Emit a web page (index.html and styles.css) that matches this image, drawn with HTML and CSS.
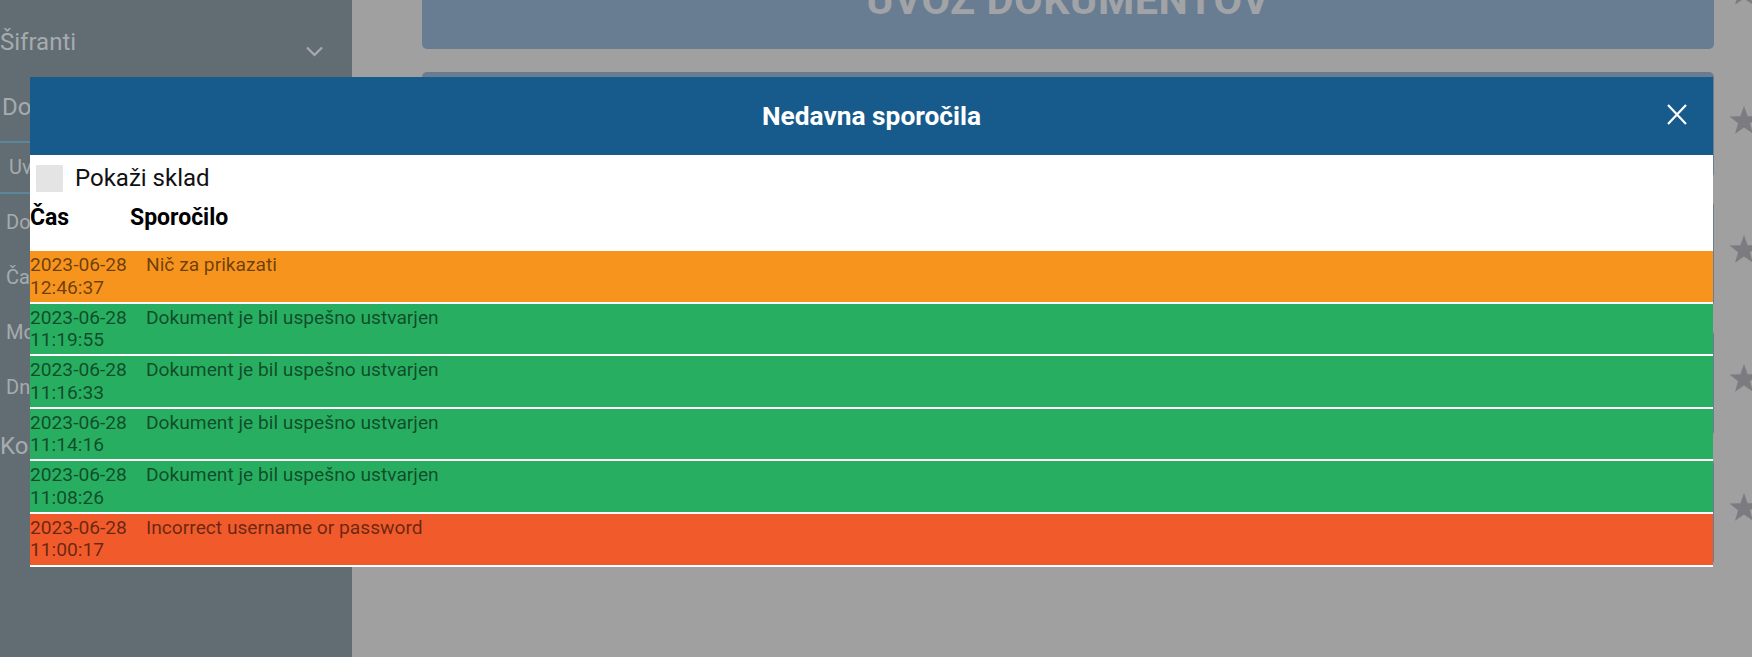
FILE: index.html
```html
<!DOCTYPE html>
<html lang="sl">
<head>
<meta charset="utf-8">
<title>Nedavna sporočila</title>
<link rel="stylesheet" href="styles.css">
</head>
<body>
<div class="app">
  <aside class="sidebar">
    <div class="nav-head first">
      <span>Šifranti</span>
      <svg class="chev" width="17" height="11" viewBox="0 0 17 11"><path d="M1 1.5 L8.5 9 L16 1.5" fill="none" stroke="#a6abae" stroke-width="2.2"/></svg>
    </div>
    <div class="nav-head open">Dokumenti</div>
    <div class="sub-item current">Uvoz dokumentov</div>
    <div class="sub-item">Dokumenti</div>
    <div class="sub-item">Čakalna vrsta</div>
    <div class="sub-item">Moji dokumenti</div>
    <div class="sub-item">Dnevnik</div>
    <div class="nav-head last">Kontakti</div>
  </aside>
  <main class="content">
    <div class="crow">
      <div class="card"><span class="card-title">UVOZ DOKUMENTOV</span></div>
      <svg class="star" width="30" height="28" viewBox="0 0 30 28"><polygon points="15,0 18.6,10.2 29.5,10.6 20.9,17.3 24,27.8 15,21.6 6,27.8 9.1,17.3 0.5,10.6 11.4,10.2" fill="#7c7b82"/></svg>
    </div>
    <div class="crow">
      <div class="card"></div>
      <svg class="star" width="30" height="28" viewBox="0 0 30 28"><polygon points="15,0 18.6,10.2 29.5,10.6 20.9,17.3 24,27.8 15,21.6 6,27.8 9.1,17.3 0.5,10.6 11.4,10.2" fill="#7c7b82"/></svg>
    </div>
    <div class="crow">
      <div class="card"></div>
      <svg class="star" width="30" height="28" viewBox="0 0 30 28"><polygon points="15,0 18.6,10.2 29.5,10.6 20.9,17.3 24,27.8 15,21.6 6,27.8 9.1,17.3 0.5,10.6 11.4,10.2" fill="#7c7b82"/></svg>
    </div>
    <div class="crow">
      <div class="card"></div>
      <svg class="star" width="30" height="28" viewBox="0 0 30 28"><polygon points="15,0 18.6,10.2 29.5,10.6 20.9,17.3 24,27.8 15,21.6 6,27.8 9.1,17.3 0.5,10.6 11.4,10.2" fill="#7c7b82"/></svg>
    </div>
    <div class="crow">
      <div class="card"></div>
      <svg class="star" width="30" height="28" viewBox="0 0 30 28"><polygon points="15,0 18.6,10.2 29.5,10.6 20.9,17.3 24,27.8 15,21.6 6,27.8 9.1,17.3 0.5,10.6 11.4,10.2" fill="#7c7b82"/></svg>
    </div>
  </main>
</div>

<div class="modal">
  <div class="modal-header">
    <h2 class="modal-title">Nedavna sporočila</h2>
    <svg class="close" width="20" height="21" viewBox="0 0 20 21"><path d="M1 1 L19 20 M19 1 L1 20" stroke="#fff" stroke-width="2.2" fill="none"/></svg>
  </div>
  <div class="modal-body">
    <label class="opt">
      <span class="checkbox"></span>
      <span class="opt-label">Pokaži sklad</span>
    </label>
    <div class="thead">
      <span class="th th-time">Čas</span>
      <span class="th">Sporočilo</span>
    </div>
    <div class="msg warn">
      <div class="time">2023-06-28<br>12:46:37</div>
      <div class="text">Nič za prikazati</div>
    </div>
    <div class="msg ok">
      <div class="time">2023-06-28<br>11:19:55</div>
      <div class="text">Dokument je bil uspešno ustvarjen</div>
    </div>
    <div class="msg ok">
      <div class="time">2023-06-28<br>11:16:33</div>
      <div class="text">Dokument je bil uspešno ustvarjen</div>
    </div>
    <div class="msg ok">
      <div class="time">2023-06-28<br>11:14:16</div>
      <div class="text">Dokument je bil uspešno ustvarjen</div>
    </div>
    <div class="msg ok">
      <div class="time">2023-06-28<br>11:08:26</div>
      <div class="text">Dokument je bil uspešno ustvarjen</div>
    </div>
    <div class="msg err">
      <div class="time">2023-06-28<br>11:00:17</div>
      <div class="text">Incorrect username or password</div>
    </div>
  </div>
</div>
</body>
</html>
```

FILE: styles.css
```css
* { box-sizing: border-box; }

html, body {
  margin: 0;
  padding: 0;
  width: 1752px;
  height: 657px;
  overflow: hidden;
  background: #a0a0a0;
  font-family: Roboto, "Noto Sans", sans-serif;
}

.app {
  display: flex;
  height: 657px;
}

/* ---------- sidebar ---------- */
.sidebar {
  width: 352px;
  flex: 0 0 352px;
  height: 657px;
  background: #626d73;
  color: #a6abae;
  overflow: hidden;
  white-space: nowrap;
}

.nav-head {
  font-size: 24px;
  line-height: 28px;
  padding-left: 0;
}

.nav-head.first {
  display: flex;
  justify-content: space-between;
  align-items: flex-start;
  padding: 28px 29px 36px 0;
}

.chev { margin-top: 18px; }

.nav-head.open {
  padding: 0 0 20px 2px;
  border-bottom: 2px solid #5a8799;
}

.nav-head.last {
  padding-top: 18px;
}

.sub-item {
  font-size: 20px;
  line-height: 24px;
  padding: 16px 0 15px 6px;
}

.sub-item.current {
  padding: 12px 0 13px 9px;
  border-bottom: 2px solid #5a8799;
}

/* ---------- main content (behind overlay) ---------- */
.content {
  display: flex;
  flex-direction: column;
  gap: 23px;
  margin-top: -57px;
  padding-left: 70px;
}

.crow {
  display: flex;
  align-items: flex-start;
  gap: 15px;
}

.card {
  width: 1292px;
  height: 106px;
  flex: 0 0 1292px;
  border-radius: 5px;
  background: #687d92;
  text-align: center;
  padding-top: 33px;
}

.card-title {
  font-size: 41.5px;
  line-height: 48px;
  font-weight: 700;
  color: #a1a3a6;
  letter-spacing: 0.5px;
}

.star {
  flex: 0 0 30px;
  margin-top: 34px;
}

/* ---------- modal ---------- */
.modal {
  position: absolute;
  left: 30px;
  top: 77px;
  width: 1683px;
  background: #fff;
}

.modal-header {
  position: relative;
  height: 78px;
  background: #175a8c;
  display: flex;
  align-items: center;
  justify-content: center;
}

.modal-title {
  margin: 0;
  color: #fff;
  font-size: 26.3px;
  font-weight: 700;
  line-height: 30px;
}

.close {
  position: absolute;
  right: 26px;
  top: 27px;
}

.opt {
  display: flex;
  align-items: center;
  gap: 12px;
  padding: 10px 0 0 6px;
}

.checkbox {
  width: 27px;
  height: 27px;
  background: #e4e4e4;
  border-radius: 1px;
}

.opt-label {
  font-size: 24px;
  line-height: 27px;
  color: #111;
}

.thead {
  display: flex;
  margin-top: 13px;
  padding-bottom: 20px;
  font-size: 23px;
  line-height: 26px;
  font-weight: 700;
  color: #000;
}

.th-time { width: 100px; }

.msg {
  display: flex;
  height: 52.6px;
  padding-top: 3px;
  border-bottom: 2px solid #fff;
  font-size: 19.2px;
  line-height: 22.5px;
  color: rgba(0, 0, 0, 0.58);
}

.msg.warn { background: #f7941d; }
.msg.ok   { background: #27ae60; }
.msg.err  { background: #f15a2b; }

.time { width: 116px; flex: 0 0 116px; }
```
